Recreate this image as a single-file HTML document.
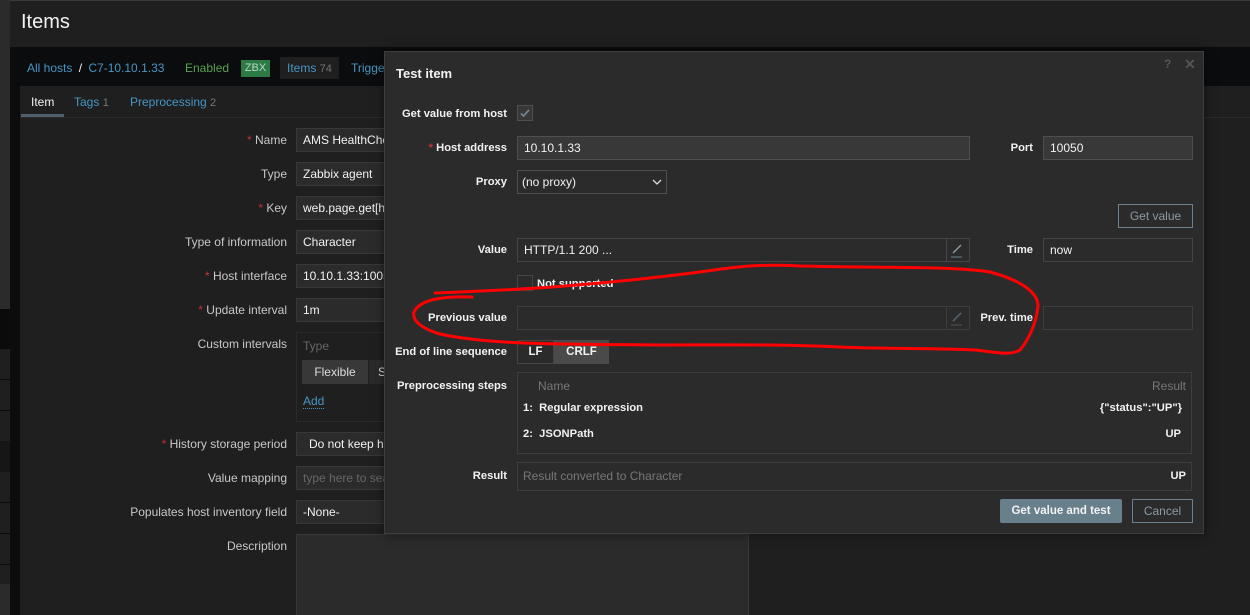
<!DOCTYPE html>
<html><head><meta charset="utf-8"><style>
*{box-sizing:border-box;margin:0;padding:0}
html,body{width:1250px;height:615px;overflow:hidden}
body{background:#1f1f1f;font-family:"Liberation Sans",Arial,sans-serif;font-size:12px;color:#f2f2f2;position:relative}
.a{position:absolute}
.blbl{position:absolute;text-align:right;color:#c8c8c8;white-space:nowrap}
.in{position:absolute;background:#2b2b2b;border:1px solid #383838;height:24px;line-height:22px;padding-left:6px;color:#f2f2f2;white-space:nowrap;overflow:hidden}
.din{position:absolute;background:#383838;border:1px solid #4f4f4f;height:24px;line-height:22px;padding-left:6px;color:#f2f2f2;white-space:nowrap;overflow:hidden}
.req{color:#c53030}
.dl{position:absolute;text-align:right;font-weight:bold;color:#f2f2f2;white-space:nowrap;font-size:11.2px;margin-top:1px}
.b{font-weight:bold;font-size:11.2px;margin-top:1px}
</style></head><body>
<div class="a" style="left:0;top:0;width:10px;height:615px;background:#2b2b2b"></div>
<div class="a" style="left:0;top:309px;width:10px;height:40px;background:#0b0b0b"></div>
<div class="a" style="left:0;top:349px;width:10px;height:235px;background:#1f1f1f"></div>
<div class="a" style="left:0;top:379px;width:10px;height:1px;background:#0b0b0b"></div>
<div class="a" style="left:0;top:410px;width:10px;height:1px;background:#0b0b0b"></div>
<div class="a" style="left:0;top:441px;width:10px;height:31px;background:#161616"></div>
<div class="a" style="left:0;top:502px;width:10px;height:1px;background:#0b0b0b"></div>
<div class="a" style="left:0;top:533px;width:10px;height:1px;background:#0b0b0b"></div>
<div class="a" style="left:0;top:564px;width:10px;height:1px;background:#0b0b0b"></div>
<div class="a" style="left:10px;top:0;width:1240px;height:47px;background:#1f1f1f;border-top:1px solid #3a3a3a"></div>
<div class="a" style="left:21px;top:11px;font-size:20px;color:#f2f2f2">Items</div>
<div class="a" style="left:10px;top:47px;width:1240px;height:40px;background:#0b0c0e"></div>
<div class="a" style="left:27px;top:61px;color:#4796c4;font-size:12px">All hosts <span style="color:#f2f2f2;margin:0 3px">/</span> C7-10.10.1.33</div>
<div class="a" style="left:185px;top:61px;color:#59a14f">Enabled</div>
<div class="a" style="left:241px;top:60px;width:29px;height:17px;background:#2c7a44;color:#b8d8c4;text-align:center;line-height:17px;font-size:11px">ZBX</div>
<div class="a" style="left:280px;top:57px;width:59px;height:22px;background:#1f1f1f;color:#4796c4;line-height:22px;padding-left:7px">Items <span style="color:#777;font-size:11px">74</span></div>
<div class="a" style="left:351px;top:61px;color:#4796c4">Trigge</div>
<div class="a" style="left:10px;top:87px;width:10px;height:528px;background:#0b0c0e"></div>
<div class="a" style="left:20px;top:86px;width:1230px;height:529px;background:#1f1f1f"></div>
<div class="a" style="left:20px;top:117px;width:1230px;height:1px;background:#2b2b2b"></div>
<div class="a" style="left:31px;top:95px;color:#f2f2f2">Item</div>
<div class="a" style="left:21px;top:114px;width:43px;height:3px;background:#4e5f6b"></div>
<div class="a" style="left:74px;top:95px;color:#4796c4">Tags <span style="color:#777;font-size:11px">1</span></div>
<div class="a" style="left:130px;top:95px;color:#4796c4">Preprocessing <span style="color:#777;font-size:11px">2</span></div>

<div class="blbl" style="right:963px;top:133px"><span class="req">*</span> Name</div>
<div class="in" style="left:296px;top:128px;width:100px">AMS HealthCheck</div>
<div class="blbl" style="right:963px;top:167px">Type</div>
<div class="in" style="left:296px;top:162px;width:100px">Zabbix agent</div>
<div class="blbl" style="right:963px;top:201px"><span class="req">*</span> Key</div>
<div class="in" style="left:296px;top:196px;width:100px">web.page.get[http</div>
<div class="blbl" style="right:963px;top:235px">Type of information</div>
<div class="in" style="left:296px;top:230px;width:100px">Character</div>
<div class="blbl" style="right:963px;top:269px"><span class="req">*</span> Host interface</div>
<div class="in" style="left:296px;top:264px;width:100px">10.10.1.33:10050</div>
<div class="blbl" style="right:963px;top:303px"><span class="req">*</span> Update interval</div>
<div class="in" style="left:296px;top:298px;width:100px">1m</div>
<div class="blbl" style="right:963px;top:337px">Custom intervals</div>
<div class="a" style="left:296px;top:332px;width:100px;height:90px;border:1px solid #2b2b2b"></div>
<div class="a" style="left:303px;top:339px;color:#666">Type</div>
<div class="a" style="left:302px;top:360px;width:66px;height:24px;background:#383838;color:#ddd;line-height:24px;text-align:center">Flexible</div>
<div class="a" style="left:369px;top:360px;width:20px;height:24px;background:#2b2b2b;color:#ddd;line-height:24px;padding-left:9px">S</div>
<div class="a" style="left:303px;top:395px;color:#4796c4;border-bottom:1px dotted #4796c4;line-height:13px">Add</div>
<div class="blbl" style="right:963px;top:437px"><span class="req">*</span> History storage period</div>
<div class="in" style="left:296px;top:432px;width:100px;padding-left:12px">Do not keep history</div>
<div class="blbl" style="right:963px;top:471px">Value mapping</div>
<div class="in" style="left:296px;top:466px;width:100px;color:#666">type here to search</div>
<div class="blbl" style="right:963px;top:505px">Populates host inventory field</div>
<div class="in" style="left:296px;top:500px;width:100px">-None-</div>
<div class="blbl" style="right:963px;top:539px">Description</div>
<div class="in" style="left:296px;top:534px;width:453px;height:90px"></div>

<div class="a" style="left:384px;top:51px;width:820px;height:483px;background:#2b2b2b;border:1px solid #3d3d3d;box-shadow:0 0 10px rgba(0,0,0,.5)"></div>
<div class="a" style="left:396px;top:66px;font-weight:bold;font-size:13px">Test item</div>
<div class="a" style="left:1164px;top:57px;color:#555;font-weight:bold;font-size:12px">?</div>
<div class="a" style="left:1184px;top:56px;color:#555;font-size:14px;font-weight:bold">✕</div>

<div class="dl" style="right:743px;top:107px">Get value from host</div>
<div class="a" style="left:517px;top:105px;width:16px;height:16px;background:#383838;border:1px solid #4f4f4f"><svg width="14" height="14" viewBox="0 0 14 14"><path d="M3 7.5l2.5 2.5L11 4" stroke="#6f8797" stroke-width="1.8" fill="none"/></svg></div>

<div class="dl" style="right:743px;top:141px"><span class="req">*</span> Host address</div>
<div class="din" style="left:517px;top:136px;width:453px">10.10.1.33</div>
<div class="dl" style="right:217px;top:141px">Port</div>
<div class="din" style="left:1043px;top:136px;width:150px">10050</div>

<div class="dl" style="right:743px;top:175px">Proxy</div>
<div class="a" style="left:517px;top:170px;width:150px;height:24px;background:#2b2b2b;border:1px solid #4f4f4f;line-height:22px;padding-left:4px">(no proxy)<svg class="a" style="left:134px;top:7px" width="10" height="8" viewBox="0 0 10 8"><path d="M1 2l4 4 4-4" stroke="#ddd" stroke-width="1.3" fill="none"/></svg></div>

<div class="a" style="left:1118px;top:204px;width:75px;height:24px;border:1px solid #6b7f8d;color:#8a9aa5;text-align:center;line-height:22px">Get value</div>

<div class="dl" style="right:743px;top:243px">Value</div>
<div class="in" style="left:517px;top:238px;width:453px;border-color:#454545">HTTP/1.1 200 ...</div>
<div class="a" style="left:946px;top:238px;width:24px;height:24px;border:1px solid #454545;background:#2b2b2b"><svg width="22" height="22" viewBox="0 0 22 22"><path d="M6 14L14 6" stroke="#8a9aa5" stroke-width="1.5"/><path d="M4 18h11" stroke="#6b7f8d" stroke-width="1"/></svg></div>
<div class="dl" style="right:217px;top:243px">Time</div>
<div class="in" style="left:1043px;top:238px;width:150px;border-color:#454545">now</div>

<div class="a" style="left:517px;top:275px;width:16px;height:16px;border:1px solid #454545"></div>
<div class="a b" style="left:537px;top:277px">Not supported</div>

<div class="dl" style="right:743px;top:311px">Previous value</div>
<div class="in" style="left:517px;top:306px;width:453px;border-color:#3d3d3d"></div>
<div class="a" style="left:946px;top:306px;width:24px;height:24px;border:1px solid #3d3d3d"><svg width="22" height="22" viewBox="0 0 22 22"><path d="M6 14L14 6" stroke="#5a6770" stroke-width="1.5"/><path d="M4 18h11" stroke="#4a555d" stroke-width="1"/></svg></div>
<div class="dl" style="right:217px;top:311px">Prev. time</div>
<div class="in" style="left:1043px;top:306px;width:150px;border-color:#3d3d3d"></div>

<div class="dl" style="right:743px;top:345px">End of line sequence</div>
<div class="a" style="left:517px;top:340px;width:37px;height:24px;background:#2b2b2b;border:1px solid #454545;text-align:center;line-height:22px;font-weight:bold;font-size:11.5px">LF</div>
<div class="a" style="left:554px;top:340px;width:55px;height:24px;background:#4a4a4a;text-align:center;line-height:24px;font-weight:bold;font-size:11.5px">CRLF</div>

<div class="dl" style="right:743px;top:379px">Preprocessing steps</div>
<div class="a" style="left:517px;top:372px;width:675px;height:82px;border:1px solid #3d3d3d"></div>
<div class="a" style="left:538px;top:379px;color:#777">Name</div>
<div class="a" style="right:64px;top:379px;color:#777">Result</div>
<div class="a b" style="left:523px;top:401px">1:&nbsp; Regular expression</div>
<div class="a b" style="right:68px;top:401px">{"status":"UP"}</div>
<div class="a b" style="left:523px;top:427px">2:&nbsp; JSONPath</div>
<div class="a b" style="right:69px;top:427px">UP</div>

<div class="dl" style="right:743px;top:469px">Result</div>
<div class="a" style="left:517px;top:462px;width:675px;height:29px;border:1px solid #3d3d3d;padding:6px 5px;color:#777">Result converted to Character</div>
<div class="a b" style="right:64px;top:469px">UP</div>

<div class="a" style="left:1000px;top:499px;width:122px;height:24px;background:#687f8c;border-radius:2px;text-align:center;line-height:24px;font-weight:bold;color:#f2f2f2;font-size:11.5px">Get value and test</div>
<div class="a" style="left:1132px;top:499px;width:61px;height:24px;border:1px solid #6b7f8d;text-align:center;line-height:22px;color:#8a9aa5">Cancel</div>

<svg class="a" style="left:0;top:0" width="1250" height="615"><path d="M435 293 C520 290 600 285 700 272 C740 266 760 264 800 266 C880 268 950 266 990 272 C1020 280 1038 292 1038 306 C1036 325 1028 340 1020 350 C1010 356 995 352 975 350 C940 348 880 349 840 347 C780 344 720 345 660 345 C560 344 490 345 440 334 C420 328 412 320 414 312 C420 300 440 296 472 297" stroke="#ff0000" stroke-width="3" fill="none" stroke-linecap="round"/></svg>
</body></html>
